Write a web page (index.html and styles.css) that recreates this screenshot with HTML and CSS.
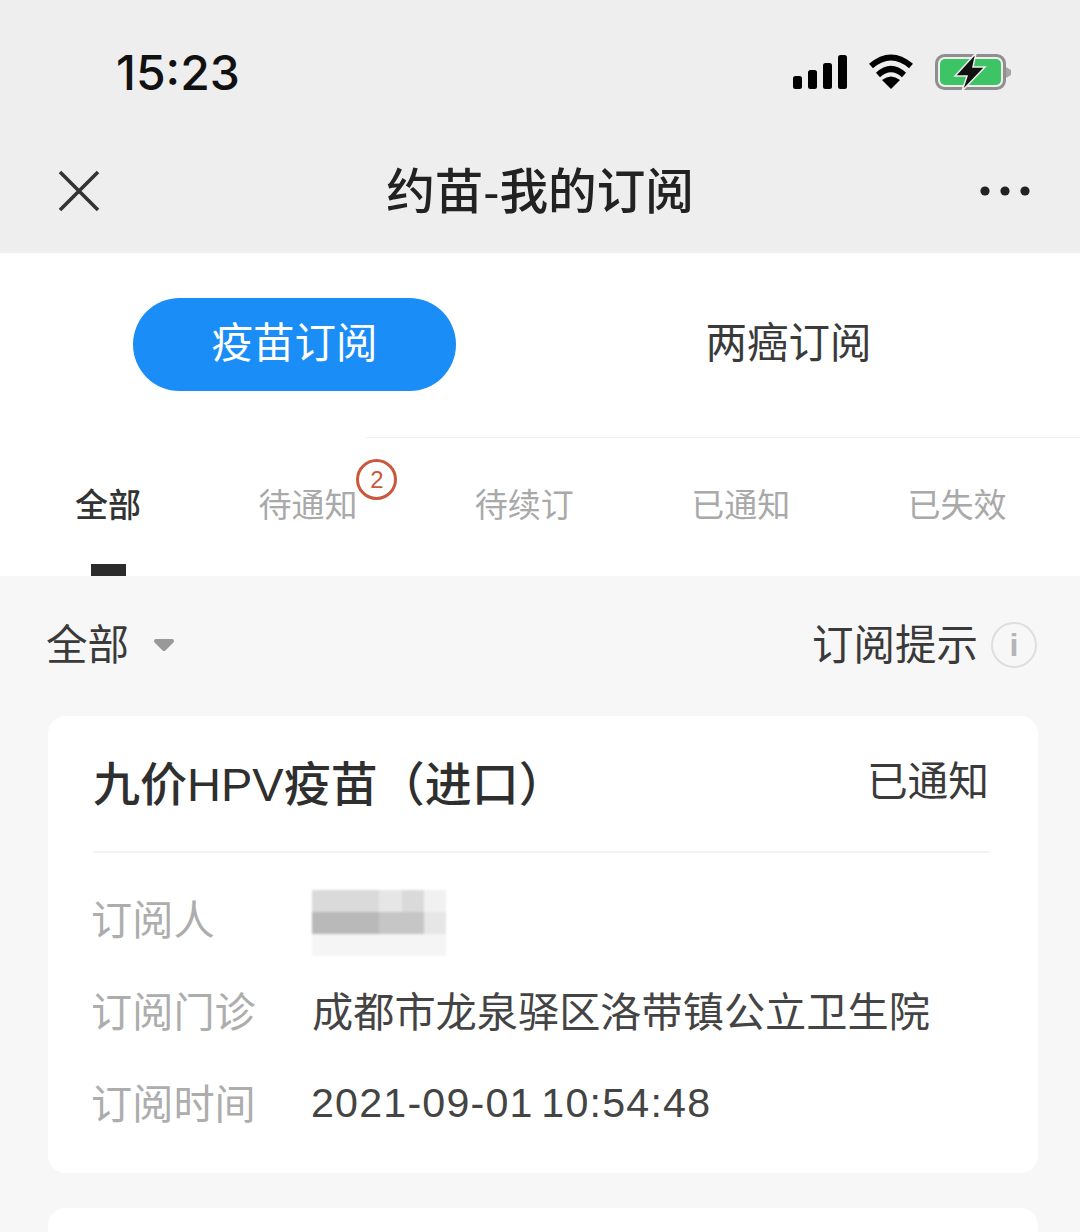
FILE: index.html
```html
<!DOCTYPE html>
<html lang="zh-CN">
<head>
  <meta charset="UTF-8" />
  <meta name="viewport" content="width=device-width, initial-scale=1.0"/>
  <title>约苗-我的订阅</title>
  <link rel="stylesheet" href="styles.css">
</head>
<body>

  <!-- Status bar + title -->
  <header class="top">
    <div class="status">
      <span class="time">15:23</span>
      <div class="status-icons">
        <svg class="signal" width="54" height="34" viewBox="0 0 54 34">
          <rect x="0" y="21" width="9" height="13" rx="2.5"/>
          <rect x="15" y="15" width="9" height="19" rx="2.5"/>
          <rect x="30" y="8" width="9" height="26" rx="2.5"/>
          <rect x="45" y="0" width="9" height="34" rx="2.5"/>
        </svg>
        <svg class="wifi" width="46" height="36" viewBox="0 0 46 36">
          <path d="M3 12 Q23 -5 43 12" fill="none" stroke="#000" stroke-width="6"/>
          <path d="M10 21 Q23 9 36 21" fill="none" stroke="#000" stroke-width="6"/>
          <path d="M14 26 Q23 19 32 26 L23 35 Z"/>
        </svg>
        <svg class="battery" width="80" height="40" viewBox="0 0 80 40">
          <rect x="3.5" y="3.5" width="68" height="33" rx="8" fill="none" stroke="#8f8f8f" stroke-width="3"/>
          <rect x="7" y="7" width="61" height="26" rx="5" fill="#3dc465"/>
          <path d="M73 15 L78 18 L78 23 L73 26 Z" fill="#a5a5a5"/>
          <path d="M43 1 L22 24 L34 24 L29 39 L52 15 L40 15 Z" fill="#111" stroke="#eee" stroke-width="1.5"/>
        </svg>
      </div>
    </div>
    <nav class="nav">
      <svg class="close" width="42" height="42" viewBox="0 0 42 42">
        <path d="M2 2 L40 40 M40 2 L2 40" stroke="#333" stroke-width="3.6" fill="none"/>
      </svg>
      <h1 class="nav-title">约苗-我的订阅</h1>
      <svg class="more" width="50" height="10" viewBox="0 0 50 10">
        <circle cx="5" cy="5" r="4.6"/>
        <circle cx="25" cy="5" r="4.6"/>
        <circle cx="45" cy="5" r="4.6"/>
      </svg>
    </nav>
  </header>

  <!-- 疫苗 / 两癌 -->
  <section class="segment">
    <div class="seg-btn seg-active">疫苗订阅</div>
    <div class="seg-btn">两癌订阅</div>
  </section>
  <div class="hairline"></div>

  <!-- Tabs -->
  <div class="tabs">
    <div class="tab tab-active">全部<i class="tab-bar"></i></div>
    <div class="tab">待通知<span class="badge">2</span></div>
    <div class="tab">待续订</div>
    <div class="tab">已通知</div>
    <div class="tab">已失效</div>
  </div>

  <main class="content">
    <div class="filter">
      <div class="filter-left">
        <span class="filter-text">全部</span>
        <svg class="caret" width="22" height="14" viewBox="0 0 22 14">
          <path d="M3 3 L19 3 L11 11 Z" fill="#999" stroke="#999" stroke-width="4" stroke-linejoin="round"/>
        </svg>
      </div>
      <div class="filter-right">
        <span class="filter-text">订阅提示</span>
        <span class="info">i</span>
      </div>
    </div>

    <div class="card">
      <div class="card-head">
        <span class="card-title">九价HPV疫苗（进口）</span>
        <span class="card-state">已通知</span>
      </div>
      <div class="card-rows">
        <div class="row">
          <span class="row-label">订阅人</span>
          <div class="mosaic">
            <i class="m2"></i><i class="m2"></i><i class="m2"></i><i class="m3"></i><i class="m2"></i><i class="m4"></i>
            <i class="m1"></i><i class="m1"></i><i class="m1"></i><i class="m6"></i><i class="m6"></i><i class="m3"></i>
            <i class="m5"></i><i class="m5"></i><i class="m5"></i><i class="m5"></i><i class="m5"></i><i class="m5"></i>
          </div>
        </div>
        <div class="row">
          <span class="row-label">订阅门诊</span>
          <span class="row-value">成都市龙泉驿区洛带镇公立卫生院</span>
        </div>
        <div class="row">
          <span class="row-label">订阅时间</span>
          <span class="row-value row-date">2021-09-01 10:54:48</span>
        </div>
      </div>
    </div>

    <div class="card card-next"></div>
  </main>

</body>
</html>
```

FILE: styles.css
```css
* {
  box-sizing: border-box;
}
html, body {
  height: 100%;
}
body {
  margin: 0;
  overflow: hidden;
  background: #f7f7f7;
  color: #3a3a3a;
  font-family: "Noto Sans CJK SC", "Noto Sans", sans-serif;
}

/* top */
.top {
  height: 253px;
  background: #eeeeee;
  padding-bottom: 15px;
}
.status {
  height: 144px;
  display: flex;
  align-items: center;
  justify-content: space-between;
  padding: 0 67px 0 116px;
}
.time {
  font-family: "Inter", sans-serif;
  font-size: 48px;
  font-weight: 500;
  color: #111;
}
.status-icons {
  display: flex;
  align-items: center;
}
.wifi {
  margin-left: 21px;
}
.battery {
  margin-left: 19px;
}
.nav {
  height: 94px;
  display: flex;
  align-items: center;
  justify-content: space-between;
  padding: 0 50px 0 58px;
}
.nav-title {
  margin: 0;
  padding-bottom: 7px;
  font-family: "Liberation Sans", "Noto Sans CJK SC", sans-serif;
  font-size: 48.6px;
  font-weight: 500;
  color: #222;
}
.more {
  fill: #222;
}

/* segment */
.segment {
  height: 184px;
  background: #fff;
  padding: 45px 0 0 133px;
  display: flex;
  align-items: flex-start;
  gap: 171px;
}
.seg-btn {
  width: 323px;
  height: 93px;
  padding-bottom: 10px;
  border-radius: 47px;
  display: flex;
  align-items: center;
  justify-content: center;
  font-size: 41.5px;
  color: #3a3a3a;
}
.seg-active {
  background: #1a8df6;
  color: #fff;
}
.hairline {
  height: 1px;
  background: linear-gradient(to right, #fff 365px, #f1f1f1 365px);
}

/* tabs */
.tabs {
  height: 138px;
  background: #fff;
  padding: 41px 0 0 75px;
  display: flex;
  gap: 117.4px;
}
.tab {
  position: relative;
  display: flex;
  flex-direction: column;
  align-items: center;
  font-size: 33px;
  line-height: 48px;
  color: #a9a9a9;
  white-space: nowrap;
}
.tab-active {
  color: #333;
  font-weight: 500;
}
.tab-bar {
  display: block;
  width: 35px;
  height: 12px;
  margin-top: 37px;
  background: #2b2b2b;
}
.badge {
  position: absolute;
  top: -20px;
  right: -40px;
  width: 41px;
  height: 41px;
  border: 3px solid #c9583c;
  border-radius: 50%;
  display: flex;
  align-items: center;
  justify-content: center;
  background: #fff;
  font-family: "Liberation Sans", sans-serif;
  font-size: 24px;
  line-height: 1;
  color: #c9583c;
}

/* filter */
.filter {
  height: 140px;
  padding: 0 43px 2px 46px;
  display: flex;
  align-items: center;
  justify-content: space-between;
  font-size: 41.5px;
}
.filter-text {
  padding-bottom: 6px;
}
.filter-left {
  display: flex;
  align-items: center;
  gap: 24px;
}
.filter-right {
  display: flex;
  align-items: center;
  gap: 13px;
}
.info {
  width: 46px;
  height: 46px;
  border: 2px solid #dedede;
  border-radius: 50%;
  display: flex;
  align-items: center;
  justify-content: center;
  font-family: "Liberation Sans", sans-serif;
  font-size: 32px;
  font-weight: 700;
  color: #b5b5b5;
}

/* card */
.card {
  margin: 0 42px 0 48px;
  padding: 0 48px 0 45px;
  background: #fff;
  border-radius: 18px;
}
.card-head {
  height: 137px;
  border-bottom: 2px solid #f3f3f3;
  display: flex;
  align-items: center;
  justify-content: space-between;
}
.card-title {
  padding-bottom: 6px;
  font-family: "Liberation Sans", "Noto Sans CJK SC", sans-serif;
  font-size: 47px;
  font-weight: 500;
  color: #2f2f2f;
}
.card-state {
  font-size: 40.7px;
  padding: 0 1px 10px 0;
}
.card-rows {
  padding: 20px 0 24px;
}
.row {
  height: 92px;
  display: grid;
  grid-template-columns: 219px 1fr;
  align-items: center;
  font-size: 41.2px;
}
.row-label {
  padding-bottom: 4px;
  margin-left: -2px;
  color: #adadad;
}
.row-value {
  padding-bottom: 4px;
  color: #444;
  white-space: nowrap;
}
.row-date {
  padding-bottom: 0;
  margin-left: -1px;
  font-family: "Liberation Sans", sans-serif;
  letter-spacing: 1.2px;
  word-spacing: -5px;
}
.mosaic {
  display: grid;
  grid-template-columns: repeat(6, 22.4px);
  grid-auto-rows: 22px;
  margin-top: 8px;
  filter: blur(0.8px);
}
.m1 { background: #b9b9b9; }
.m2 { background: #dadada; }
.m3 { background: #e6e6e6; }
.m4 { background: #f1f1f1; }
.m5 { background: #f5f5f5; }
.m6 { background: #c6c6c6; }
.card-next {
  height: 24px;
  margin-top: 35px;
  border-radius: 18px 18px 0 0;
}
```
